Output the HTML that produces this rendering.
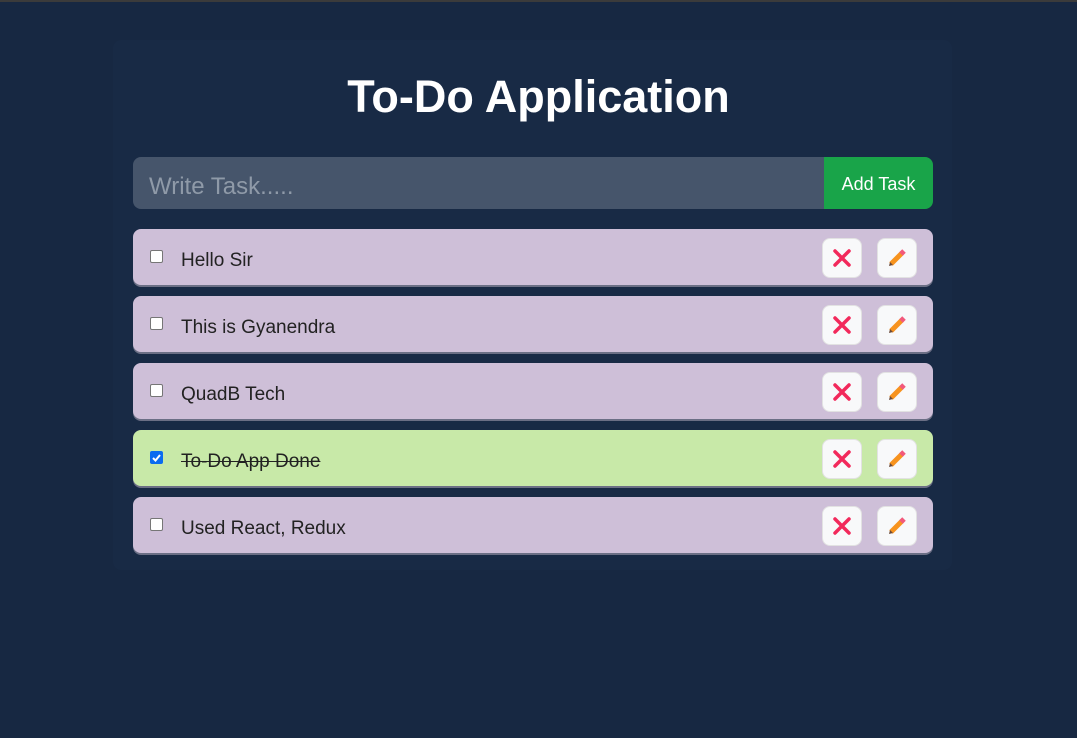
<!DOCTYPE html>
<html><head><style>
*{box-sizing:border-box;margin:0;padding:0}
html{background:#172842}
body{width:1077px;height:738px;background:#172842;font-family:"Liberation Sans",sans-serif;position:relative;overflow:hidden}
.top{position:absolute;left:0;top:0;width:1077px;height:2px;background:#3b3b3b}
.card{position:absolute;left:113px;top:40px;width:839px;height:530px;background:#182a45;border-radius:8px}
h1{position:absolute;top:71px;left:0;width:1077px;text-align:center;color:#fff;font-size:45px;font-weight:bold}
.inp{position:absolute;left:133px;top:157px;width:691px;height:52px;background:#46556b;border-radius:8px 0 0 8px;color:#8f9aa8;font-size:24px;padding:16px 0 0 16px}
.add{position:absolute;left:824px;top:157px;width:109px;height:52px;background:#19a449;border-radius:0 8px 8px 0;color:#fff;font-size:18px;text-align:center;line-height:54px}
.row{position:absolute;left:133px;width:800px;height:56px;background:#cebfd8;border-radius:8px;box-shadow:0 2px 0 #6b6f85}
.row.done{background:#c8e9a8}
.cb{position:absolute;left:17px;top:21px;width:13px;height:13px;border:1px solid #767676;border-radius:2px;background:#fff}
.done .cb{background:#0b6cf0;border-color:#0b6cf0}
.t{position:absolute;left:48px;top:21px;font-size:19px;color:#222}
.done .t{text-decoration:line-through}
.b{position:absolute;top:9px;width:40px;height:40px;background:#f8f9fa;border-radius:8px;border:1px solid #e2e2e2}
.b svg{position:absolute;left:9px;top:9px}
</style></head><body>
<div class="top"></div>
<div class="card"></div>
<h1>To-Do Application</h1>
<div class="inp">Write Task.....</div>
<div class="add">Add Task</div>

<div class="row" style="top:229px"><div class="cb"></div><div class="t">Hello Sir</div>
<div class="b" style="left:689px"><svg width="20" height="20"><path d="M3 3L17 17M17 3L3 17" stroke="#f2295b" stroke-width="3.5" stroke-linecap="round"/></svg></div>
<div class="b" style="left:744px"><svg width="20" height="20"><path d="M4 16L15 5" stroke="#f7931e" stroke-width="5"/><path d="M14 6L17 3" stroke="#f2597b" stroke-width="5"/><path d="M2 18L3 14L6 17Z" fill="#6a4a3a"/></svg></div></div>

<div class="row" style="top:296px"><div class="cb"></div><div class="t">This is Gyanendra</div>
<div class="b" style="left:689px"><svg width="20" height="20"><path d="M3 3L17 17M17 3L3 17" stroke="#f2295b" stroke-width="3.5" stroke-linecap="round"/></svg></div>
<div class="b" style="left:744px"><svg width="20" height="20"><path d="M4 16L15 5" stroke="#f7931e" stroke-width="5"/><path d="M14 6L17 3" stroke="#f2597b" stroke-width="5"/><path d="M2 18L3 14L6 17Z" fill="#6a4a3a"/></svg></div></div>

<div class="row" style="top:363px"><div class="cb"></div><div class="t">QuadB Tech</div>
<div class="b" style="left:689px"><svg width="20" height="20"><path d="M3 3L17 17M17 3L3 17" stroke="#f2295b" stroke-width="3.5" stroke-linecap="round"/></svg></div>
<div class="b" style="left:744px"><svg width="20" height="20"><path d="M4 16L15 5" stroke="#f7931e" stroke-width="5"/><path d="M14 6L17 3" stroke="#f2597b" stroke-width="5"/><path d="M2 18L3 14L6 17Z" fill="#6a4a3a"/></svg></div></div>

<div class="row done" style="top:430px"><div class="cb"><svg width="11" height="11" style="position:absolute;left:0;top:0"><path d="M2 6L4.5 8.5L9 3" stroke="#fff" stroke-width="2" fill="none"/></svg></div><div class="t">To-Do App Done</div>
<div class="b" style="left:689px"><svg width="20" height="20"><path d="M3 3L17 17M17 3L3 17" stroke="#f2295b" stroke-width="3.5" stroke-linecap="round"/></svg></div>
<div class="b" style="left:744px"><svg width="20" height="20"><path d="M4 16L15 5" stroke="#f7931e" stroke-width="5"/><path d="M14 6L17 3" stroke="#f2597b" stroke-width="5"/><path d="M2 18L3 14L6 17Z" fill="#6a4a3a"/></svg></div></div>

<div class="row" style="top:497px"><div class="cb"></div><div class="t">Used React, Redux</div>
<div class="b" style="left:689px"><svg width="20" height="20"><path d="M3 3L17 17M17 3L3 17" stroke="#f2295b" stroke-width="3.5" stroke-linecap="round"/></svg></div>
<div class="b" style="left:744px"><svg width="20" height="20"><path d="M4 16L15 5" stroke="#f7931e" stroke-width="5"/><path d="M14 6L17 3" stroke="#f2597b" stroke-width="5"/><path d="M2 18L3 14L6 17Z" fill="#6a4a3a"/></svg></div></div>
</body></html>
